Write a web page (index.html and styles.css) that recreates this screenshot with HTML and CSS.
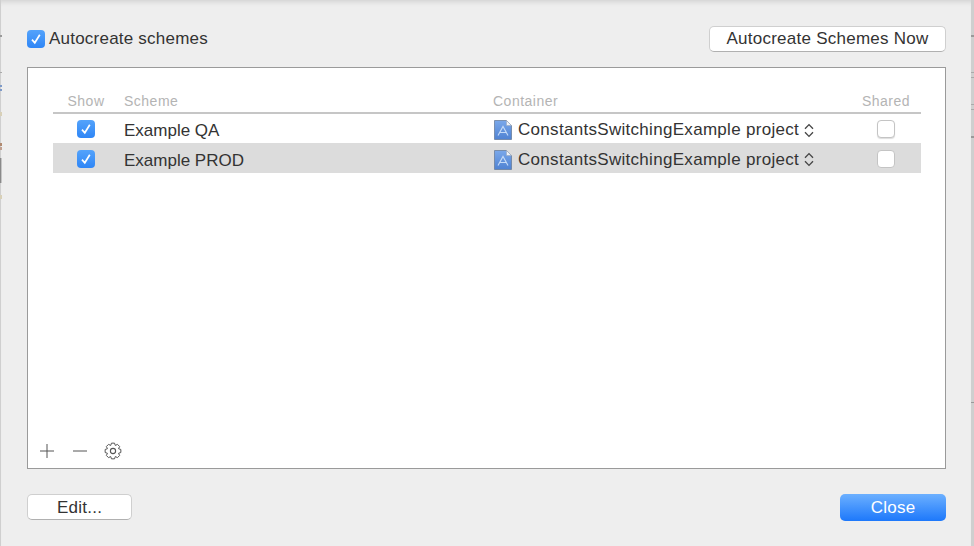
FILE: index.html
```html
<!DOCTYPE html>
<html lang="en">
<head>
<meta charset="utf-8">
<title>Manage Schemes</title>
<link rel="stylesheet" href="styles.css">
</head>
<body>
<svg class="defs" width="0" height="0" aria-hidden="true">
  <defs>
    <linearGradient id="projfill" x1="0" y1="0" x2="0" y2="1"><stop offset="0" stop-color="#7aa8ea"/><stop offset="1" stop-color="#4f82d2"/></linearGradient>
  </defs>
  <symbol id="tick" viewBox="0 0 18 18"><path d="M5 9.6 L7.8 12.8 L12.8 4.8" fill="none" stroke="#fff" stroke-width="1.7"/></symbol>
  <symbol id="proj" viewBox="0 0 18 20">
    <path d="M0.5 0.5H12.5L17.5 5.5V19.5H0.5Z" fill="url(#projfill)" stroke="#6b7f9c" stroke-width="0.8"/>
    <path d="M12.5 0.5V5.5H17.5Z" fill="#eef2f8" stroke="#9aa8bc" stroke-width="0.6"/>
    <path d="M4 15.5 L9 6.5 L14 15.5 M5.5 12.5H12.5" fill="none" stroke="#c6dbf7" stroke-width="1.1"/>
  </symbol>
  <symbol id="updown" viewBox="0 0 10 15"><path d="M1 5.8 L5 1.6 L9 5.8 M1 9.2 L5 13.4 L9 9.2" fill="none" stroke="#444" stroke-width="1.3"/></symbol>
</svg>
<main class="sheet">
  <header class="top">
    <label class="auto"><span class="check on"><svg><use href="#tick"/></svg></span>Autocreate schemes</label>
    <button class="btn now">Autocreate Schemes Now</button>
  </header>
  <section class="panel">
    <div class="table">
      <div class="row head">
        <span class="c-show">Show</span><span class="c-scheme">Scheme</span><span class="c-cont">Container</span><span class="c-shared">Shared</span>
      </div>
      <div class="row item first">
        <span class="c-show"><span class="check on"><svg><use href="#tick"/></svg></span></span>
        <span class="c-scheme">Example QA</span>
        <span class="c-cont"><svg class="proj"><use href="#proj"/></svg>ConstantsSwitchingExample project<svg class="updown"><use href="#updown"/></svg></span>
        <span class="c-shared"><span class="check"></span></span>
      </div>
      <div class="row item sel">
        <span class="c-show"><span class="check on"><svg><use href="#tick"/></svg></span></span>
        <span class="c-scheme">Example PROD</span>
        <span class="c-cont"><svg class="proj"><use href="#proj"/></svg>ConstantsSwitchingExample project<svg class="updown"><use href="#updown"/></svg></span>
        <span class="c-shared"><span class="check"></span></span>
      </div>
    </div>
    <div class="tools">
      <svg class="tool" viewBox="0 0 14 14"><path d="M7 0V14M0 7H14" stroke="#555" stroke-width="1" fill="none"/></svg>
      <svg class="tool" viewBox="0 0 14 14"><path d="M0 7H14" stroke="#555" stroke-width="1" fill="none"/></svg>
      <svg class="gear" viewBox="0 0 18 18"><path d="M16.85 7.47L16.85 10.53L14.54 11.3L15.63 13.47L13.47 15.63L11.3 14.54L10.53 16.85L7.47 16.85L6.7 14.54L4.53 15.63L2.37 13.47L3.46 11.3L1.15 10.53L1.15 7.47L3.46 6.7L2.37 4.53L4.53 2.37L6.7 3.46L7.47 1.15L10.53 1.15L11.3 3.46L13.47 2.37L15.63 4.53L14.54 6.7Z" fill="none" stroke="#555" stroke-width="1" stroke-linejoin="round"/><circle cx="9" cy="9" r="2.6" fill="none" stroke="#555" stroke-width="1.1"/></svg>
    </div>
  </section>
  <footer class="bottom">
    <button class="btn edit">Edit...</button>
    <button class="btn primary">Close</button>
  </footer>
</main>
<svg class="edge edge-left" viewBox="0 0 2 546" aria-hidden="true">
  <rect y="35" width="2" height="2" fill="#999"/>
  <rect y="72" width="2" height="1" fill="#aaa"/>
  <rect y="85" width="2" height="2" fill="#7e9ac8"/>
  <rect y="89" width="2" height="2" fill="#7e9ac8"/>
  <rect y="112" width="2" height="4" fill="#d8d0b8"/>
  <rect y="143" width="2" height="3" fill="#b08a70"/>
  <rect y="147" width="2" height="3" fill="#c0a090"/>
  <rect y="158" width="1.4" height="25" fill="#8a8a8a"/>
  <rect y="195" width="2" height="4" fill="#d8d0b8"/>
</svg>
<svg class="edge edge-right" viewBox="0 0 3 546" aria-hidden="true">
  <rect y="35" width="3" height="2" fill="#999"/>
  <rect y="72" width="3" height="1" fill="#aaa"/>
  <rect y="77" width="3" height="1" fill="#aaa"/>
  <rect y="104" width="3" height="1" fill="#aaa"/>
  <rect y="109" width="3" height="1" fill="#aaa"/>
  <rect y="136" width="3" height="2" fill="#999"/>
  <rect y="402" width="3" height="1" fill="#999"/>
</svg>
</body>
</html>
```

FILE: styles.css
```css
* { box-sizing: border-box; }
html, body { margin: 0; height: 100%; }
body {
  width: 974px;
  height: 546px;
  overflow: hidden;
  background: #cfcfcf;
  font-family: "Liberation Sans", Arial, sans-serif;
  color: #333;
  padding: 0 3px 0 1px;
  position: relative;
}
.defs { position: absolute; }
.edge { position: absolute; top: 0; height: 546px; display: block; }
.edge-left { left: 0; width: 2px; }
.edge-right { right: 0; width: 3px; }
.sheet {
  height: 546px;
  background: #eeeeee;
  padding: 25px 25px 0 26px;
  display: flex;
  flex-direction: column;
  box-shadow: inset 0 6px 5px -4px #d2d2d2;
}
.top {
  height: 27px;
  display: flex;
  justify-content: space-between;
  align-items: center;
}
.auto { display: flex; align-items: center; gap: 4px; font-size: 17px; letter-spacing: 0.22px; }
.check {
  display: block;
  width: 18px;
  height: 18px;
  border-radius: 4px;
  background: #fff;
  border: 1px solid #c4c4c4;
  box-shadow: 0 1px 1px #ddd;
}
.check.on { background: linear-gradient(#54a3fb, #2f86f6); border: 0; box-shadow: none; }
.check svg { display: block; width: 18px; height: 18px; }
.btn {
  font: 17px "Liberation Sans", Arial, sans-serif;
  letter-spacing: 0.25px;
  color: #333;
  background: #fff;
  border: 1px solid #cfcfcf;
  border-bottom-color: #b0b0b0;
  border-radius: 5px;
  padding: 1px 0 0;
  height: 26px;
}
.now { width: 237px; }
.panel {
  margin-top: 15px;
  height: 402px;
  background: #fff;
  border: 1px solid #9a9a9a;
  padding: 24px 24px 0 25px;
  display: flex;
  flex-direction: column;
  justify-content: space-between;
}
.row { display: flex; align-items: center; height: 30px; font-size: 17px; letter-spacing: 0.3px; }
.row.head { height: 22px; font-size: 14px; letter-spacing: 0.5px; color: #b4b4b4; border-bottom: 2px solid #c6c6c6; align-items: flex-start; padding-top: 1px; }
.item.first { height: 29px; }
.item.sel { background: #dcdcdc; }
.c-show { width: 71px; padding-right: 5px; display: flex; justify-content: center; flex: none; }
.sel .c-show { padding-top: 2px; }
.c-scheme { width: 369px; flex: none; }
.item .c-scheme { padding-top: 5px; letter-spacing: 0; }
.c-cont { width: 358px; flex: none; display: flex; align-items: center; }
.item .c-cont { padding-top: 3px; padding-left: 1px; }
.c-shared { width: 70px; flex: none; display: flex; justify-content: center; }
.sel .c-shared { padding-top: 2px; }
.proj { width: 18px; height: 20px; margin-right: 6px; flex: none; }
.updown { width: 10px; height: 15px; margin-left: 5px; flex: none; }
.tools { display: flex; align-items: center; height: 20px; margin: 0 0 7px -13px; }
.tool { width: 14px; height: 14px; display: block; margin-right: 19px; }
.gear { width: 18px; height: 18px; display: block; margin-left: -2px; }
.bottom {
  margin-top: 25px;
  display: flex;
  justify-content: space-between;
}
.edit { width: 105px; }
.primary {
  width: 106px;
  height: 27px;
  color: #fff;
  border: 0;
  background: linear-gradient(#6cb0ff, #1d78fb);
}
```
